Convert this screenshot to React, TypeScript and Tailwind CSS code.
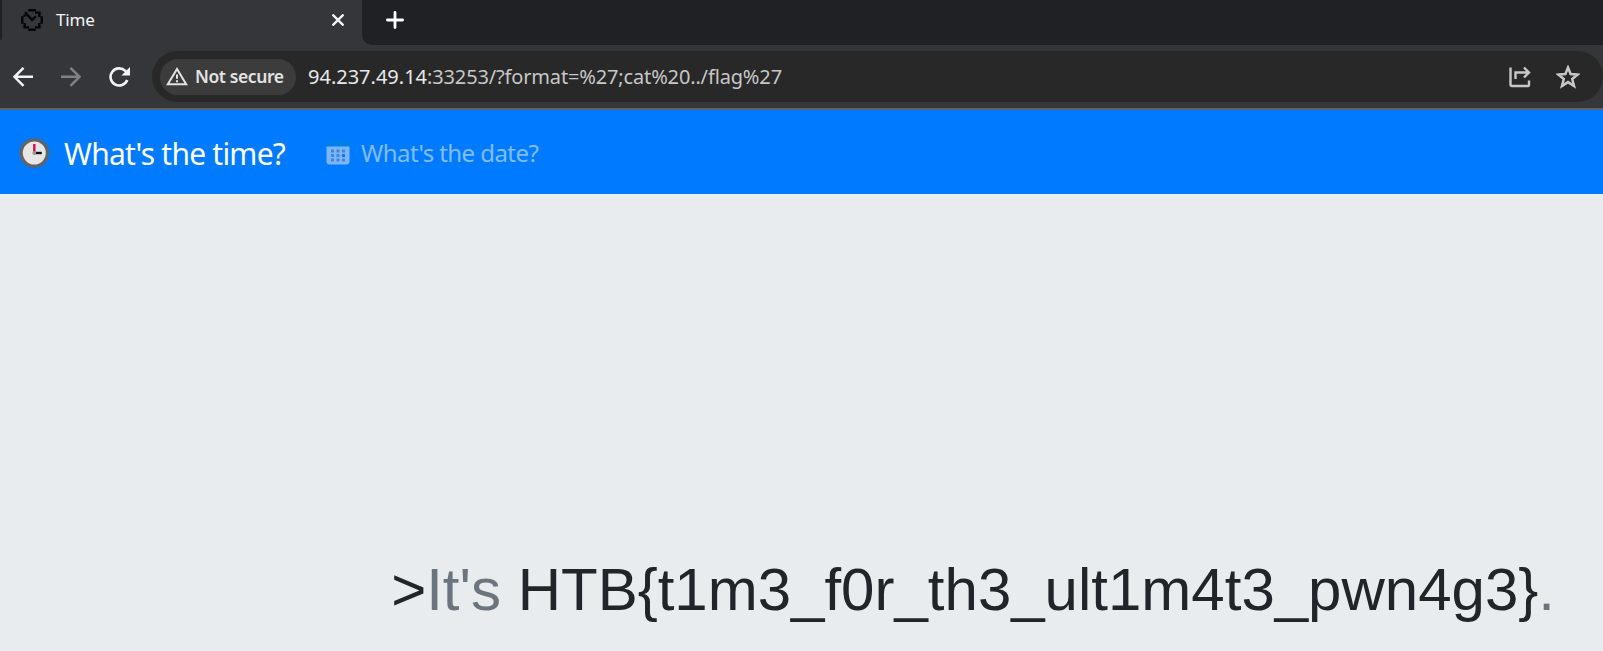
import React from "react";

function Favicon() {
  return (
    <svg className="h-[22px] w-[22px] shrink-0" viewBox="0 0 22 22" fill="none" stroke="#050506" strokeWidth="2.4">
      <path d="M7.2 1.3h7.6M14 3.6h4.4V8M20.7 7.2v7.6M18.4 14v4.4H14M14.8 20.7H7.2M8 18.4H3.6V14M1.3 14.8V7.2M2.4 6.6h2.4M4 3.2l1.5 1.5M5.2 4.6l5.8 6.2 4-3.4" />
    </svg>
  );
}

function Clock() {
  return (
    <svg className="h-[30px] w-[30px] shrink-0" viewBox="0 0 30 30">
      <circle cx="15.3" cy="15" r="13.1" fill="#e6e6e6" stroke="#636363" strokeWidth="3.2" />
      <path d="M15.3 6v9" stroke="#d0104c" strokeWidth="2.4" />
      <path d="M15.3 15h7.5" stroke="#111" strokeWidth="2.4" />
      <circle cx="15.3" cy="15" r="1.9" fill="#999" />
    </svg>
  );
}

function Calendar() {
  return (
    <svg className="h-6 w-6 shrink-0" viewBox="0 0 24 24">
      <rect x="0.5" y="1" width="23" height="22.5" rx="3" fill="#7db5fb" />
      <path d="M0 5.5V4a4 4 0 0 1 4-4h16a4 4 0 0 1 4 4v1.5z" fill="#0080e8" />
      <g fill="#3f86dd">
        {[5, 10.5, 16].map((x) => [8.5, 13, 17.5].map((y) => <rect key={x + "-" + y} x={x} y={y} width="3" height="3" />))}
      </g>
      <rect x="16" y="13" width="3" height="3" fill="#007bff" />
    </svg>
  );
}

export default function App() {
  return (
    <div className="flex h-[651px] w-full flex-col overflow-hidden bg-[#e8ecef] font-['Noto_Sans',sans-serif]">
      <div className="flex h-[45px] shrink-0 bg-[#202124]">
        <div className="w-[2px] bg-[#35363a]">
          <div className="h-10 rounded-br-[4px] bg-[#202124]" />
        </div>
        <div className="flex w-[360px] items-center bg-[#35363a] pb-[5px] pl-[19px]">
          <Favicon />
          <span className="ml-[13px] text-[17px] tracking-[-0.2px] text-[#f1f3f4]">Time</span>
          <svg className="ml-auto mr-[18px] h-3 w-3" viewBox="0 0 12 12" stroke="#f1f3f4" strokeWidth="2.3"><path d="m.5 .5 11 11M11.500 .5l-11 11" /></svg>
        </div>
        <div className="flex-1 bg-[#35363a]">
          <div className="h-full rounded-bl-[10px] bg-[#202124] pl-[24px] pt-[11px]">
            <svg className="h-[18px] w-[18px]" viewBox="0 0 18 18" stroke="#fff" strokeWidth="2.8" strokeLinecap="round"><path d="M9 1.400v15.200M1.400 9h15.200" /></svg>
          </div>
        </div>
      </div>
      <div className="flex h-[65px] shrink-0 items-center border-b-2 border-[#606266] bg-[#35363a] pl-[13px]">
        <svg className="h-5 w-5" viewBox="0 0 20 20" fill="none" stroke="#f1f3f4" strokeWidth="2.4"><path d="M20 9.800H2M10.500 .8l-9 9 9 9" /></svg>
        <svg className="ml-[28px] h-5 w-5" viewBox="0 0 20 20" fill="none" stroke="#808185" strokeWidth="2.4"><path d="M0 9.800h18M9.500 .8l9 9-9 9" /></svg>
        <svg className="ml-[28px] h-5 w-[21px]" viewBox="0 0 21 20" fill="none" stroke="#f1f3f4" strokeWidth="2.6"><path d="M18.200 13A8.600 8.600 0 1 1 16.300 3.900L18.500 6" /><path d="M21 0v8.600h-8.600z" fill="#f1f3f4" stroke="none" /></svg>
        <div className="ml-[22px] flex h-[51px] flex-1 items-center rounded-full bg-[#282828] pl-2">
          <div className="flex h-9 w-[136px] shrink-0 items-center rounded-full bg-[#3c3c3c] pl-[6px]">
            <svg className="h-[19px] w-[22px] shrink-0" viewBox="0 0 22 19" fill="none" stroke="#e3e3e3" strokeWidth="2"><path d="M11 2 1.800 17.300h18.400zM11 7.500v4.300M11 13.200v2" /></svg>
            <span className="ml-[7px] whitespace-nowrap text-[17.5px] font-semibold tracking-[-0.4px] text-[#e3e3e3]">Not secure</span>
          </div>
          <span className="ml-3 whitespace-nowrap text-[20px] text-[#c7c7c7]"><span className="text-[#e8e8e8]">94.237.49.14</span><span className="tracking-[-0.15px]">:33253/?format=%27;cat%20../flag%27</span></span>
          <svg className="ml-auto h-[22px] w-[22px]" viewBox="0 0 22 22" fill="none" stroke="#c7c7c7" strokeWidth="2.4"><path d="M1.500 1.500v17a1.500 1.500 0 0 0 1.500 1.500H19a1 1 0 0 0 1-1v-4.500M6.500 13V6.500h13M15 1.500l5 5-5 5" /></svg>
          <svg className="ml-[25px] mr-[23px] h-6 w-6" viewBox="0 0 24 24" fill="none" stroke="#c7c7c7" strokeWidth="2.5"><path d="m12 2.500 2.600 6.500 7 .5-5.400 4.500 1.800 7-6-3.900L6 21l1.800-7-5.400-4.500 7-.5z" /></svg>
        </div>
      </div>
      <nav className="flex h-[84px] shrink-0 items-center bg-[#007bff] pl-[19px] pt-[2px]">
        <Clock />
        <span className="ml-[15px] whitespace-nowrap text-[30px] tracking-[-0.77px] text-white">What's the time?</span>
        <span className="ml-[41px]"><Calendar /></span>
        <span className="ml-[11px] whitespace-nowrap text-[24px] tracking-[-0.57px] text-[#80bdff]">What's the date?</span>
      </nav>
      <main className="flex flex-1 items-end justify-end pb-[25px] pr-[48px] font-['Liberation_Sans',Arial,sans-serif]">
        <h1 className="whitespace-nowrap text-[60px] leading-[72px] text-[#212529]">&gt;<span className="text-[#6c757d]">It's</span> HTB&#123;t1m3_f0r_th3_ult1m4t3_pwn4g3&#125;<span className="text-[#6c757d]">.</span></h1>
      </main>
    </div>
  );
}
